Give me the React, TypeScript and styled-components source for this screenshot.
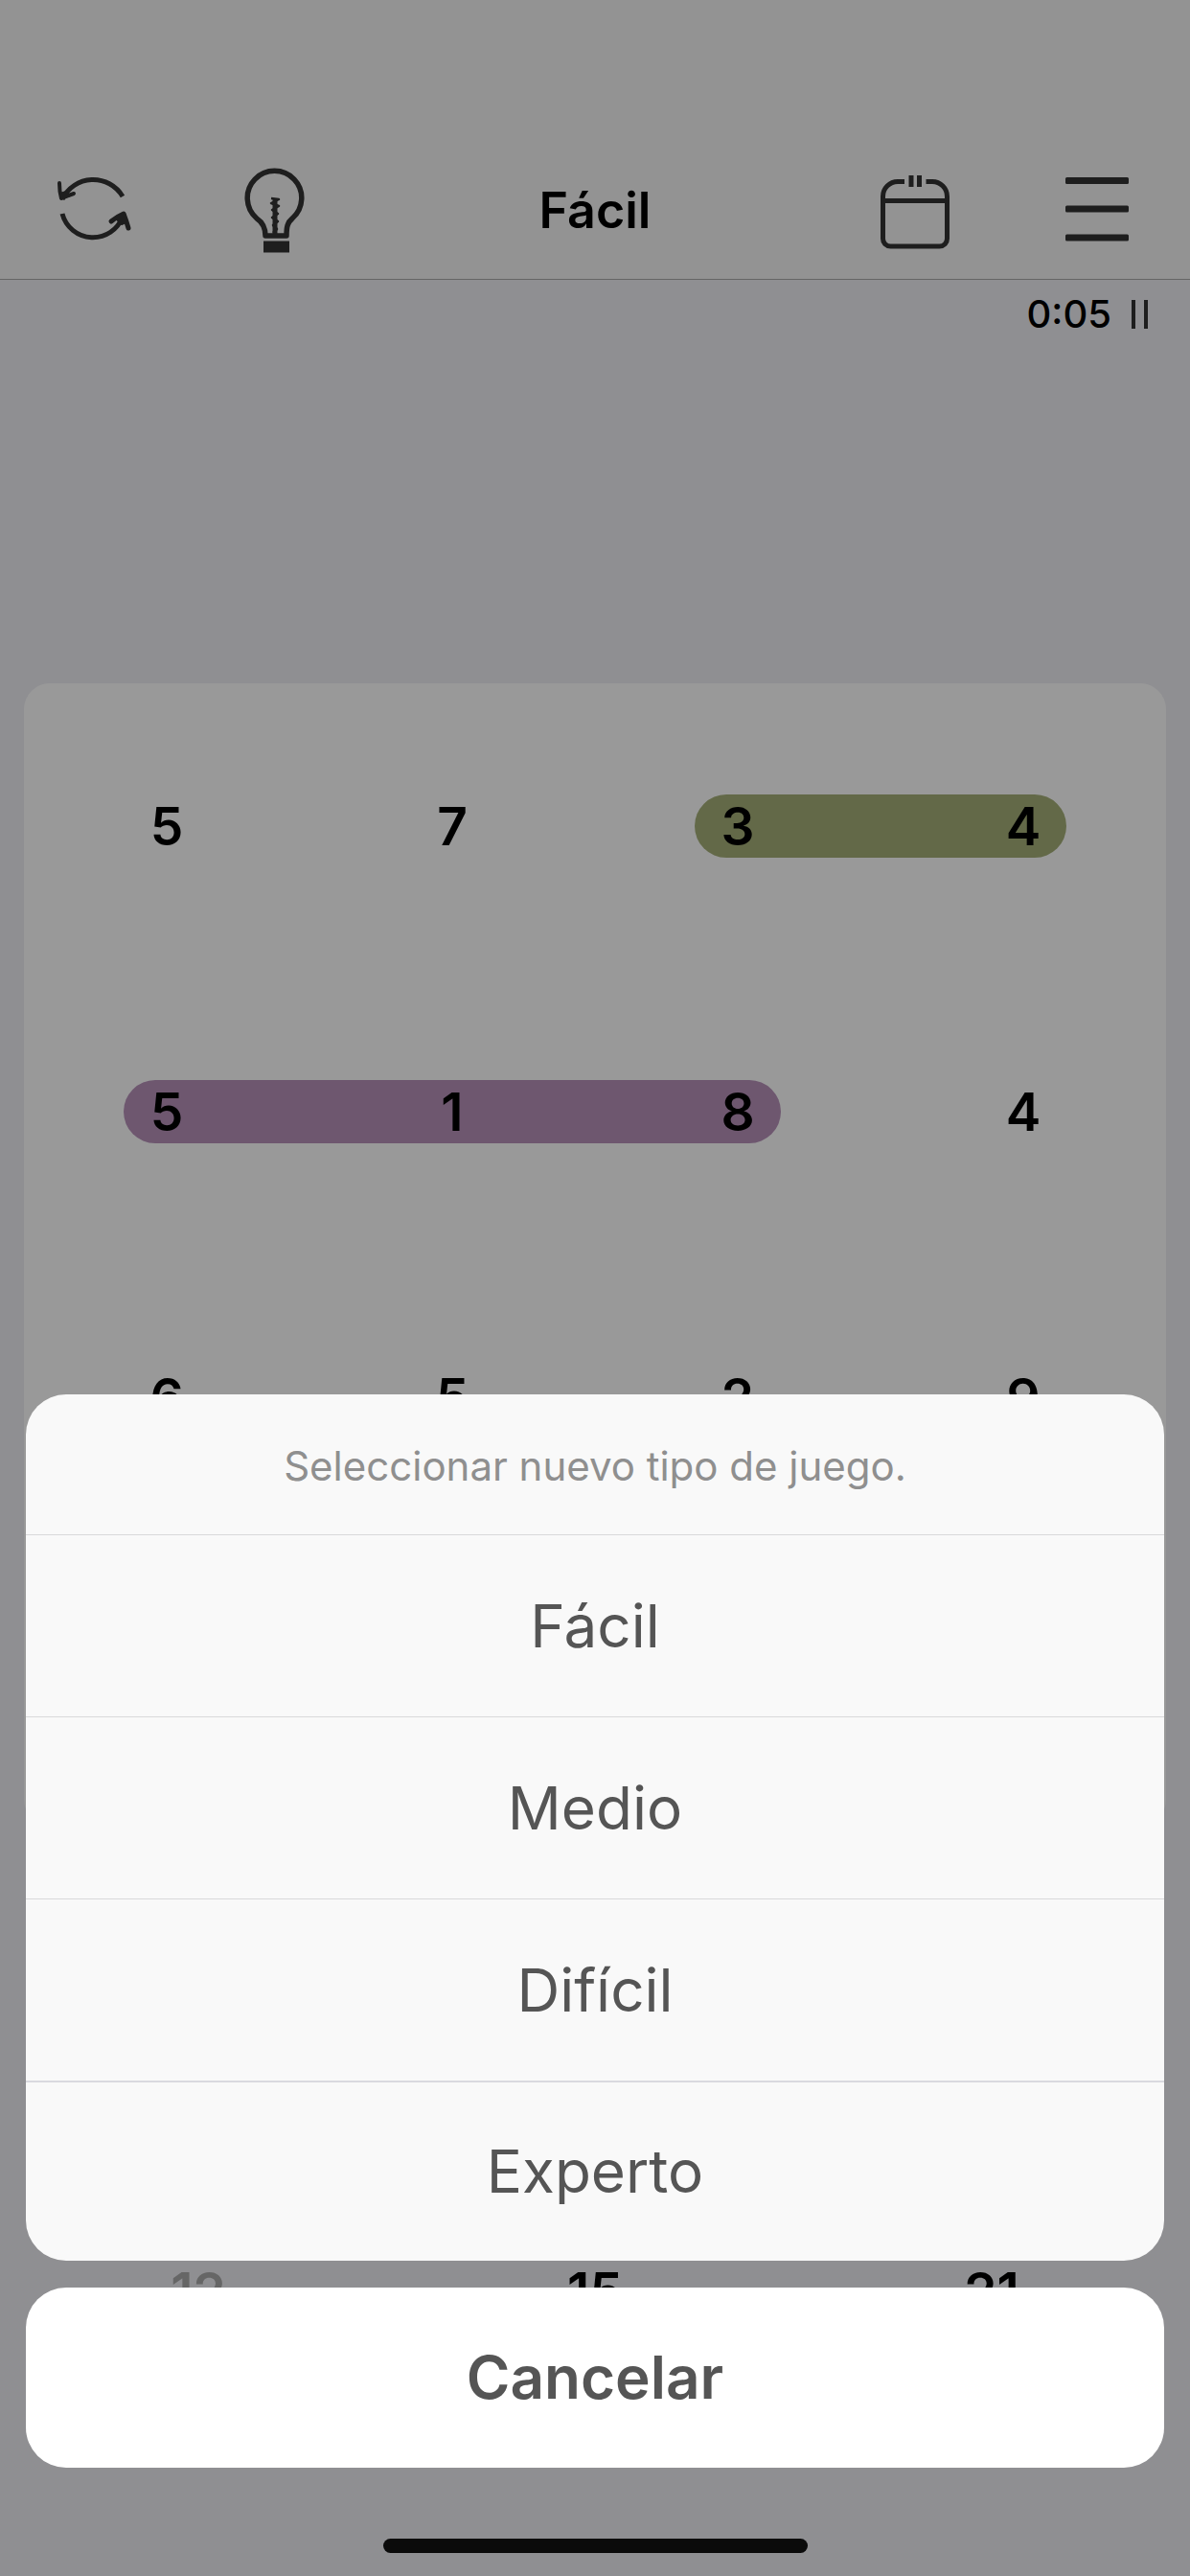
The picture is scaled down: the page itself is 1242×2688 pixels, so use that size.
import React from "react";
import styled, { createGlobalStyle } from "styled-components";

const GlobalStyle = createGlobalStyle`
  * { box-sizing: border-box; }
  body {
    margin: 0;
    background: #efeff4;
    font-family: Inter, "Liberation Sans", sans-serif;
    color: #000;
  }
  button { font-family: inherit; }
`;

const Screen = styled.div`
  position: relative;
  min-height: 100vh;
  overflow: hidden;
  background: #efeff4;
`;

const Toolbar = styled.header`
  display: grid;
  grid-template-columns: 190px 190px 1fr 190px 190px;
  align-items: center;
  justify-items: center;
  height: 292px;
  padding: 148px 2px 0;
  background: #f6f6f6;
  border-bottom: 1px solid #a8a8a8;
`;

const ToolButton = styled.button`
  display: flex;
  padding: 0;
  border: 0;
  background: none;
  color: #333;
`;

const Title = styled.h1`
  margin: 0;
  font-size: 52px;
  line-height: 64px;
  font-weight: 600;
`;

const TimerBar = styled.div`
  display: flex;
  justify-content: flex-end;
  align-items: center;
  gap: 20px;
  height: 72px;
  padding-right: 42px;
`;

const Time = styled.span`
  font-size: 40px;
  line-height: 48px;
  font-weight: 500;
`;

const Board = styled.main`
  display: grid;
  grid-template-columns: repeat(4, 1fr);
  margin: 349px 25px 0;
  border-radius: 27px;
  background: #fff;
`;

const Row = styled.div`
  grid-column: 1 / -1;
  display: grid;
  grid-template-columns: repeat(4, 1fr);
  align-items: center;
  height: 298px;
`;

const Digit = styled.span<{ $column: number }>`
  grid-area: 1 / ${(p) => p.$column};
  z-index: 1;
  font-size: 55px;
  line-height: 66px;
  font-weight: 600;
  text-align: center;
`;

const Pill = styled.span<{ $from: number; $to: number; $color: string }>`
  grid-area: 1 / ${(p) => p.$from} / 2 / ${(p) => p.$to + 1};
  height: 66px;
  margin: 0 104px;
  border-radius: 33px;
  background: ${(p) => p.$color};
`;

const Sums = styled.div`
  display: grid;
  grid-template-columns: repeat(3, 1fr);
  margin-top: 453px;
`;

const Sum = styled.span<{ $done: boolean }>`
  font-size: 55px;
  line-height: 66px;
  font-weight: 600;
  text-align: center;
  color: ${(p) => (p.$done ? "#aaa" : "#000")};
`;

const Backdrop = styled.div`
  position: absolute;
  inset: 0;
  z-index: 2;
  display: flex;
  flex-direction: column;
  justify-content: flex-end;
  align-items: center;
  padding: 0 27px 24px;
  background: rgba(0, 0, 0, 0.4);
`;

const Sheet = styled.section`
  width: 100%;
  border-radius: 42px;
  overflow: hidden;
  background: #f9f9f9;
`;

const Message = styled.p`
  margin: 0;
  padding: 50px 0 46px;
  font-size: 42px;
  line-height: 50px;
  text-align: center;
  color: #8f8f8f;
`;

const Option = styled.button<{ $last: boolean }>`
  display: block;
  width: 100%;
  height: ${(p) => (p.$last ? "188px" : "190px")};
  padding: 0;
  border: 0;
  border-top: ${(p) => (p.$last ? "2px solid #d9d9df" : "1px solid #d9d9da")};
  background: none;
  font-size: 62px;
  line-height: 76px;
  color: #555;
`;

const Cancel = styled.button`
  width: 100%;
  height: 188px;
  margin: 28px 0 74px;
  padding: 0;
  border: 0;
  border-radius: 42px;
  background: #fff;
  font-size: 62px;
  line-height: 76px;
  font-weight: 600;
  color: #555;
`;

const HomeIndicator = styled.div`
  width: 443px;
  height: 15px;
  border-radius: 8px;
  background: #0b0b0b;
`;

const RefreshIcon = () => (
  <svg width="84" height="84" viewBox="0 0 84 84" fill="none" stroke="currentColor" strokeWidth="5" strokeLinecap="round" strokeLinejoin="round" aria-hidden="true">
    <path d="M10 30A35.700 35.700 0 0 1 73 27" strokeLinecap="butt" />
    <path d="M7 13Q7 22 9 29Q16 26 22 24" strokeWidth="4" />
    <path d="M8 24L9 29L18 26L14 22Z" fill="currentColor" strokeWidth="2" />
    <path d="M10 45A33 33 0 0 0 73 48" strokeLinecap="butt" />
    <path d="M61 53Q67 48 74 45Q77 53 79 60" />
    <path d="M66 50L73 46L76 54L72 56Z" fill="currentColor" strokeWidth="2" />
  </svg>
);

const BulbIcon = () => (
  <svg width="64" height="90" viewBox="0 0 64 90" fill="none" stroke="currentColor" strokeWidth="5.500" strokeLinejoin="round" aria-hidden="true">
    <path d="M22 71C22 62 19 57 13 53A28.300 28.300 0 1 1 50 53C45 57 44 62 44 71Z" />
    <path d="M32 70V32" strokeWidth="5" />
    <path d="M28 32l8 1-8 4 8 3-7 4 6 4-6 4 6 4-5 4 4 4-4 4" strokeWidth="2.500" />
    <path d="M20 76.500h27v12H20z" fill="currentColor" stroke="none" />
  </svg>
);

const CalendarIcon = () => (
  <svg width="74" height="82" viewBox="0 0 74 82" fill="none" stroke="currentColor" strokeWidth="5" aria-hidden="true">
    <path d="M26 10.500H19A15.500 15.500 0 0 0 3.500 26V70A8 8 0 0 0 11.500 78H62.500A8 8 0 0 0 70.500 70V26A15.500 15.500 0 0 0 55 10.500H48.500" />
    <path d="M3.500 30.500H70.500M33 4V16M41.500 4V16" />
  </svg>
);

const MenuIcon = () => (
  <svg width="68" height="72" viewBox="0 0 68 72" fill="currentColor" aria-hidden="true">
    <rect x="1" y="1" width="66" height="7" rx="1.500" />
    <rect x="1" y="30.500" width="66" height="7" rx="1.500" />
    <rect x="1" y="60.500" width="66" height="7" rx="1.500" />
  </svg>
);

const PauseIcon = () => (
  <svg width="20" height="30" viewBox="0 0 20 30" fill="currentColor" aria-hidden="true">
    <path d="M1 0h4v30H1zM14 0h4v30h-4z" />
  </svg>
);

type PillData = { from: number; to: number; color: string };

const rows: { digits: number[]; pill?: PillData }[] = [
  { digits: [5, 7, 3, 4], pill: { from: 3, to: 4, color: "#a6b079" } },
  { digits: [5, 1, 8, 4], pill: { from: 1, to: 3, color: "#b791ba" } },
  { digits: [6, 5, 2, 9] },
  { digits: [] },
];

const sums = [
  { value: 12, done: true },
  { value: 15, done: false },
  { value: 21, done: false },
];

const levels = ["Fácil", "Medio", "Difícil", "Experto"];

export default function App() {
  return (
    <Screen>
      <GlobalStyle />
      <Toolbar>
        <ToolButton aria-label="Reiniciar"><RefreshIcon /></ToolButton>
        <ToolButton aria-label="Pista"><BulbIcon /></ToolButton>
        <Title>Fácil</Title>
        <ToolButton aria-label="Calendario"><CalendarIcon /></ToolButton>
        <ToolButton aria-label="Menú"><MenuIcon /></ToolButton>
      </Toolbar>
      <TimerBar>
        <Time>0:05</Time>
        <ToolButton aria-label="Pausa"><PauseIcon /></ToolButton>
      </TimerBar>
      <Board>
        {rows.map((row, r) => (
          <Row key={r}>
            {row.pill && <Pill $from={row.pill.from} $to={row.pill.to} $color={row.pill.color} />}
            {row.digits.map((d, c) => (
              <Digit key={c} $column={c + 1}>{d}</Digit>
            ))}
          </Row>
        ))}
      </Board>
      <Sums>
        {sums.map((s) => (
          <Sum key={s.value} $done={s.done}>{s.value}</Sum>
        ))}
      </Sums>
      <Backdrop>
        <Sheet role="dialog" aria-labelledby="sheet-message">
          <Message id="sheet-message">Seleccionar nuevo tipo de juego.</Message>
          {levels.map((level, i) => (
            <Option key={level} $last={i === levels.length - 1}>{level}</Option>
          ))}
        </Sheet>
        <Cancel>Cancelar</Cancel>
        <HomeIndicator />
      </Backdrop>
    </Screen>
  );
}
